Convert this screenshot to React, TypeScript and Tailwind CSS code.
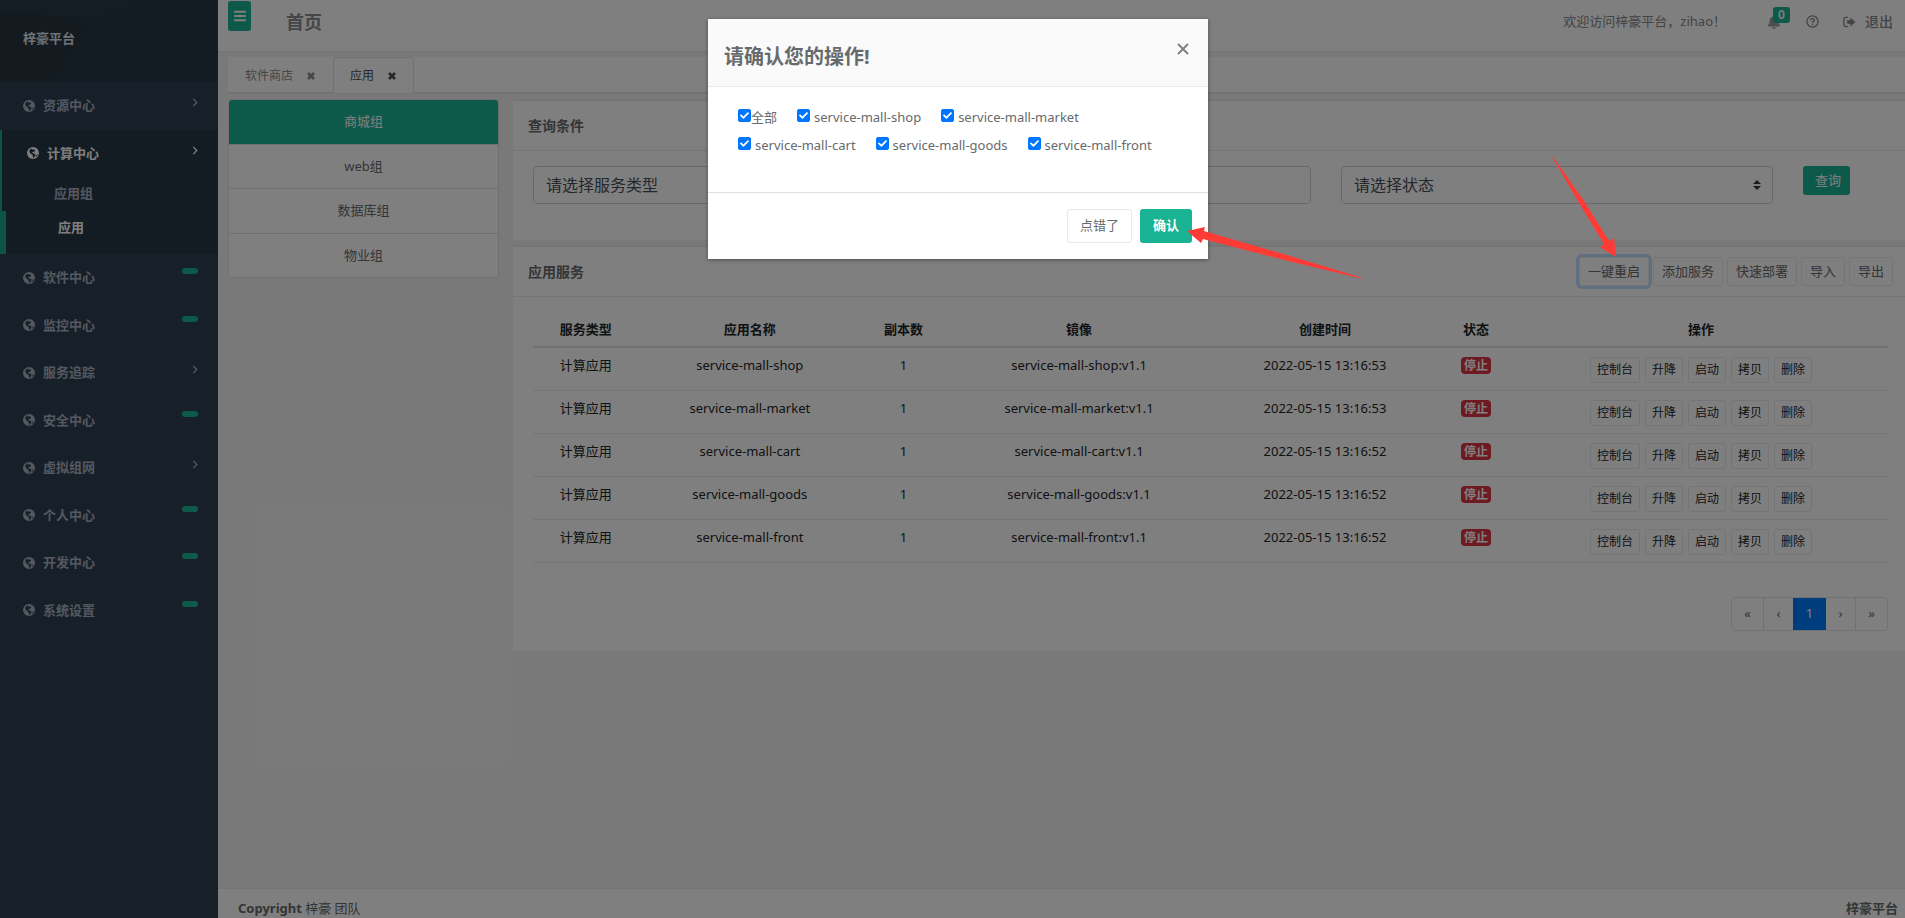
import React from "react";
import { FaBars, FaBell, FaCheck } from "react-icons/fa";

type MenuItem = { name: string; kind: "arrow" | "badge" };

const menu: MenuItem[] = [
  { name: "软件中心", kind: "badge" },
  { name: "监控中心", kind: "badge" },
  { name: "服务追踪", kind: "arrow" },
  { name: "安全中心", kind: "badge" },
  { name: "虚拟组网", kind: "arrow" },
  { name: "个人中心", kind: "badge" },
  { name: "开发中心", kind: "badge" },
  { name: "系统设置", kind: "badge" },
];

const groups = ["商城组", "web组", "数据库组", "物业组"];

const services = [
  { name: "service-mall-shop", time: "2022-05-15 13:16:53" },
  { name: "service-mall-market", time: "2022-05-15 13:16:53" },
  { name: "service-mall-cart", time: "2022-05-15 13:16:52" },
  { name: "service-mall-goods", time: "2022-05-15 13:16:52" },
  { name: "service-mall-front", time: "2022-05-15 13:16:52" },
];

const panelActions = ["一键重启", "添加服务", "快速部署", "导入", "导出"];
const rowActions = ["控制台", "升降", "启动", "拷贝", "删除"];

function GlobeIcon() {
  return (
    <svg viewBox="0 0 1536 1536" className="h-3 w-3 shrink-0 fill-current" aria-hidden="true">
      <path
        fillRule="evenodd"
        d="M768 0a768 768 0 1 0 0 1536a768 768 0 1 0 0-1536zM1040 500l-60 50l-80 10l-40 70l-70-30l-90 60l-30 90l60 60l110-10l50 60l90 30l110 70l-10 110l-90 90l-30 120l-110 130l-60-20l-20-160l-70-120l20-110l-90-60l-130-50l-110-110l-60-130l-40-140l60-140l140-120l150-50l40 60l-60 80l90 20l110-70l100 20l70 80zM1130 1080l130-60l60-110l60 40l-60 150l-110 120l-90 20z"
      />
    </svg>
  );
}

function Chevron() {
  return (
    <svg viewBox="0 0 6 10" className="mt-[2px] h-[9px] w-[6px]" fill="none" stroke="currentColor" strokeWidth="1.4" aria-hidden="true">
      <path d="M1 1l4 4l-4 4" />
    </svg>
  );
}

function Cross() {
  return (
    <svg viewBox="0 0 8 8" className="mt-px h-2 w-2" stroke="currentColor" strokeWidth="2.6" aria-hidden="true">
      <path d="M1 1l6 6M7 1l-6 6" />
    </svg>
  );
}

function MenuLink({ name, kind }: MenuItem) {
  return (
    <li>
      <a href="#" className="flex items-start justify-between py-[14px] pr-5 pl-[23px]">
        <span className="flex items-center gap-2">
          <GlobeIcon />
          {name}
        </span>
        {kind === "arrow" ? <Chevron /> : <span className="h-[6px] w-4 rounded-[3px] bg-[#1ab394]" />}
      </a>
    </li>
  );
}

function Sidebar() {
  return (
    <aside className="w-[218px] shrink-0 bg-[#2f4050] font-semibold text-[#a7b1c2]">
      <div className="relative h-[82px] overflow-hidden bg-[#263844]">
        <svg viewBox="0 0 218 82" className="absolute inset-0 h-full w-full" preserveAspectRatio="none" aria-hidden="true">
          <path d="M0 12L97 18L55 82H0z" fill="#273643" />
          <path d="M97 18L152 82H55z" fill="#263945" />
          <path d="M97 18L140 0H218V50L152 82z" fill="#273844" />
          <path d="M0 0H140L97 18L0 12z" fill="#273a46" />
        </svg>
        <strong className="relative block pt-[29px] pl-[23px] font-semibold text-[#dfe4ed]">梓豪平台</strong>
      </div>
      <ul>
        <MenuLink name="资源中心" kind="arrow" />
        <li className="relative bg-[#293846] text-white">
          <span className="absolute inset-y-0 left-0 w-[2px] bg-[#19aa8d]" />
          <a href="#" className="flex items-start justify-between py-[14px] pr-5 pl-[27px]">
            <span className="flex items-center gap-2">
              <GlobeIcon />
              计算中心
            </span>
            <Chevron />
          </a>
          <ul>
            <li>
              <a href="#" className="block py-[7px] pl-[54px] text-[#a7b1c2]">应用组</a>
            </li>
            <li className="relative border-l-[6px] border-[#19aa8d] pb-[10px]">
              <a href="#" className="block py-[7px] pl-[52px]">应用</a>
            </li>
          </ul>
        </li>
        {menu.map((item) => (
          <MenuLink key={item.name} {...item} />
        ))}
      </ul>
    </aside>
  );
}

function Header() {
  return (
    <header className="flex h-[52px] shrink-0 items-start border-b border-[#e7eaec] bg-white">
      <button type="button" aria-label="菜单" className="mt-px ml-[10px] flex h-[30px] w-[23px] items-center justify-center rounded-[3px] bg-[#1ab394] text-white">
        <FaBars className="h-[14px] w-[12px]" />
      </button>
      <h1 className="ml-[35px] pt-[8px] text-lg font-semibold text-[#888c90]">首页</h1>
      <div className="ml-auto flex h-[43px] items-center pr-3 text-[#888888]">
        <span>欢迎访问梓豪平台，zihao！</span>
        <button type="button" aria-label="通知" className="relative ml-[41px] text-[#999c9e]">
          <FaBell className="h-[14px] w-[14px]" />
          <span className="absolute -top-2 left-[6px] rounded-[3px] bg-[#1ab394] px-[5px] text-xs leading-4 font-semibold text-white">0</span>
        </button>
        <button type="button" aria-label="帮助" className="ml-[25px]">
          <svg viewBox="0 0 14 14" className="h-[13px] w-[13px]" fill="none" stroke="currentColor" strokeWidth="1.4" aria-hidden="true">
            <circle cx="7" cy="7" r="6" />
            <path d="M5 5.6C5 3.4 9 3.4 9 5.6C9 7 7 6.8 7 8.3M7 9.4V10.8" />
          </svg>
        </button>
        <a href="#" className="ml-[24px] flex items-center gap-[9px] text-sm font-medium text-[#888888]">
          <svg viewBox="0 0 14 12" className="h-3 w-[13px]" aria-hidden="true">
            <path d="M5.5 1H3Q1 1 1 3V9Q1 11 3 11H5.5" fill="none" stroke="currentColor" strokeWidth="1.4" />
            <path d="M4.5 4H8V1.2L13.3 6L8 10.8V8H4.5z" fill="currentColor" />
          </svg>
          退出
        </a>
      </div>
    </header>
  );
}

function Tabs() {
  return (
    <nav className="ml-[10px] flex h-[36px] shrink-0 border-b border-[#dee2e6] bg-white text-xs shadow-[0_1px_0_#e7eaec]">
      <a href="#" className="flex w-[105px] items-center gap-[14px] pt-[2px] pl-[17px] text-[#8b8d90]">
        软件商店
        <Cross />
      </a>
      <a href="#" className="-mb-px flex w-[81px] items-center gap-[14px] rounded-t-[4px] border border-b-0 border-[#dee2e6] bg-white pl-4 text-[#495057]">
        应用
        <Cross />
      </a>
    </nav>
  );
}

function GroupList() {
  return (
    <ul className="w-[271px] shrink-0 self-start overflow-hidden rounded-[4px] border border-[#e0e1e2] bg-white text-center">
      {groups.map((group, i) => (
        <li key={group} className={i === 0 ? "bg-[#1ab394] text-white" : "border-t border-[#e0e1e2]"}>
          <a href="#" className="block py-3">{group}</a>
        </li>
      ))}
    </ul>
  );
}

const selectClass = "h-[38px] w-full appearance-none rounded-[4px] border border-[#ced4da] bg-white px-3 text-base text-[#495057]";

function Filter() {
  return (
    <section className="border-t-2 border-[#e7eaec] bg-white">
      <h2 className="border-b border-[#e7eaec] px-[15px] pt-[15px] pb-[14px] text-sm font-semibold">查询条件</h2>
      <div className="flex items-start gap-[30px] px-5 pt-[15px] pb-9">
        <select aria-label="服务类型" className={selectClass + " flex-1"}>
          <option>请选择服务类型</option>
        </select>
        <input aria-label="应用名称" className={selectClass + " flex-1"} />
        <div className="relative w-[432px] shrink-0">
          <select aria-label="状态" className={selectClass}>
            <option>请选择状态</option>
          </select>
          <svg viewBox="0 0 8 10" className="pointer-events-none absolute top-[14px] right-3 h-[10px] w-2 fill-[#343a40]" aria-hidden="true">
            <path d="M4 0L8 4H0zM4 10L8 6H0z" />
          </svg>
        </div>
        <div className="w-[82px] shrink-0">
          <button type="button" className="h-[29px] rounded-[3px] bg-[#1ab394] pr-[9px] pl-3 text-white">查询</button>
        </div>
      </div>
    </section>
  );
}

function Services() {
  return (
    <section className="border-t-2 border-[#e7eaec] bg-white pb-5">
      <div className="flex items-center justify-between border-b border-[#e7eaec] py-[10px] pr-3 pl-[15px]">
        <h2 className="text-sm font-semibold">应用服务</h2>
        <div className="flex gap-1">
          {panelActions.map((action, i) => (
            <button
              key={action}
              type="button"
              className={
                "h-[29px] rounded-[3px] border border-[#e7eaec] bg-white px-2 " +
                (i === 0 ? "ring-3 ring-[#bfdeff]" : "")
              }
            >
              {action}
            </button>
          ))}
        </div>
      </div>
      <div className="pt-[13px] pr-[17px] pl-5">
        <table className="w-full table-fixed text-center text-[#212529]">
          <colgroup>
            <col className="w-[7.8%]" />
            <col className="w-[16.4%]" />
            <col className="w-[6.3%]" />
            <col className="w-[19.6%]" />
            <col className="w-[16.7%]" />
            <col className="w-[5.6%]" />
            <col className="w-[27.6%]" />
          </colgroup>
          <thead>
            <tr className="h-[37px] border-b-2 border-[#dee2e6]">
              {["服务类型", "应用名称", "副本数", "镜像", "创建时间", "状态", "操作"].map((head) => (
                <th key={head} className="pt-1 font-semibold">{head}</th>
              ))}
            </tr>
          </thead>
          <tbody>
            {services.map((service) => (
              <tr key={service.name} className="border-b border-[#e7eaec] align-top">
                <td className="pt-2">计算应用</td>
                <td className="pt-2">{service.name}</td>
                <td className="pt-2">1</td>
                <td className="pt-2">{service.name}:v1.1</td>
                <td className="pt-2">{service.time}</td>
                <td className="pt-2">
                  <span className="inline-block rounded-[4px] bg-[#dc3545] px-[3px] text-xs leading-[17px] font-semibold text-white">停止</span>
                </td>
                <td className="pt-[9px] pb-[7px]">
                  <div className="flex justify-center gap-[5px]">
                    {rowActions.map((action) => (
                      <button key={action} type="button" className="h-[26px] rounded-[3px] border border-[#e7eaec] bg-white px-[6px] text-xs">
                        {action}
                      </button>
                    ))}
                  </div>
                </td>
              </tr>
            ))}
          </tbody>
        </table>
        <div className="mt-[34px] flex justify-end">
          <div className="flex h-[34px] overflow-hidden rounded-[4px] border border-[#dee2e6] text-[#676a6c]">
            <button type="button" className="w-8 border-r border-[#dee2e6]">«</button>
            <button type="button" className="w-[29px]">‹</button>
            <button type="button" className="-my-px w-[33px] bg-[#007bff] text-white">1</button>
            <button type="button" className="w-[30px] border-r border-[#dee2e6]">›</button>
            <button type="button" className="w-[31px]">»</button>
          </div>
        </div>
      </div>
    </section>
  );
}

function Check({ label, tight }: { label: string; tight?: boolean }) {
  return (
    <label className={tight ? "flex items-start" : "flex items-start gap-1"}>
      <span className="relative mt-px flex h-[13px] w-[13px]">
        <input type="checkbox" defaultChecked className="peer h-[13px] w-[13px] appearance-none rounded-[2px] border border-[#767676] bg-white checked:border-[#0075ff] checked:bg-[#0075ff]" />
        <FaCheck className="pointer-events-none absolute inset-[2px] hidden h-[9px] w-[9px] text-white peer-checked:block" />
      </span>
      <span>{label}</span>
    </label>
  );
}

function ConfirmDialog() {
  return (
    <div className="absolute inset-0 flex items-start justify-center bg-black/50 pt-[19px] pl-[11px]">
      <div role="dialog" aria-modal="true" aria-labelledby="confirm-title" className="w-[500px] bg-white shadow-[0_1px_4px_rgba(0,0,0,0.4)]">
        <div className="flex h-[68px] items-start justify-between border-b border-[#e9ecef] bg-[#fafafa] px-4">
          <h2 id="confirm-title" className="pt-6 text-xl font-bold">请确认您的操作!</h2>
          <button type="button" aria-label="关闭" className="mt-[24px] mr-[3px] text-[#808080]">
            <svg viewBox="0 0 12 12" className="h-3 w-3" stroke="currentColor" strokeWidth="2" aria-hidden="true">
              <path d="M1 1l10 10M11 1L1 11" />
            </svg>
          </button>
        </div>
        <div className="h-[105px] px-[30px] pt-[21px]">
          <div className="mb-2 flex gap-5">
            <Check label="全部" tight />
            <Check label="service-mall-shop" />
            <Check label="service-mall-market" />
          </div>
          <div className="flex gap-5">
            <Check label="service-mall-cart" />
            <Check label="service-mall-goods" />
            <Check label="service-mall-front" />
          </div>
        </div>
        <div className="flex justify-end gap-2 border-t border-[#dee2e6] p-4">
          <button type="button" className="h-[34px] rounded-[3px] border border-[#e7eaec] bg-white px-3">点错了</button>
          <button type="button" className="h-[34px] rounded-[3px] bg-[#1ab394] px-[13px] font-semibold text-white">确认</button>
        </div>
      </div>
    </div>
  );
}

function Arrows() {
  return (
    <div className="pointer-events-none absolute inset-0">
      <svg viewBox="0 0 180 55" className="absolute top-[225px] left-[1187px] h-[55px] w-[180px] fill-[#ff3b36]" aria-hidden="true">
        <path d="M0 6L18 2L17 6L100 30L179 54L168 52L97 35L16 14L14 18z" />
      </svg>
      <svg viewBox="0 0 70 105" className="absolute top-[155px] left-[1550px] h-[105px] w-[70px] fill-[#ff3b36]" aria-hidden="true">
        <path d="M1 0L6 6L34 46L59 86L64 83L66 102L50 92L54 89L29 48z" />
      </svg>
    </div>
  );
}

export default function App() {
  return (
    <div className="relative flex h-screen overflow-hidden bg-[#f3f3f4] font-['Noto_Sans','Noto_Sans_CJK_SC',sans-serif] text-[13px] leading-normal text-[#676a6c]">
      <Sidebar />
      <main className="flex min-w-0 flex-1 flex-col">
        <Header />
        <div className="h-[5px] shrink-0" />
        <Tabs />
        <div className="mt-[6px] ml-[10px] flex flex-1 gap-[14px]">
          <GroupList />
          <div className="flex min-w-0 flex-1 flex-col gap-[5px]">
            <Filter />
            <Services />
          </div>
        </div>
        <footer className="flex h-[30px] shrink-0 justify-between border-t border-[#e7eaec] bg-white pt-[10px] pr-[7px] pl-5">
          <p>
            <strong className="font-bold">Copyright</strong> 梓豪 团队
          </p>
          <strong className="font-semibold">梓豪平台</strong>
        </footer>
      </main>
      <ConfirmDialog />
      <Arrows />
    </div>
  );
}
